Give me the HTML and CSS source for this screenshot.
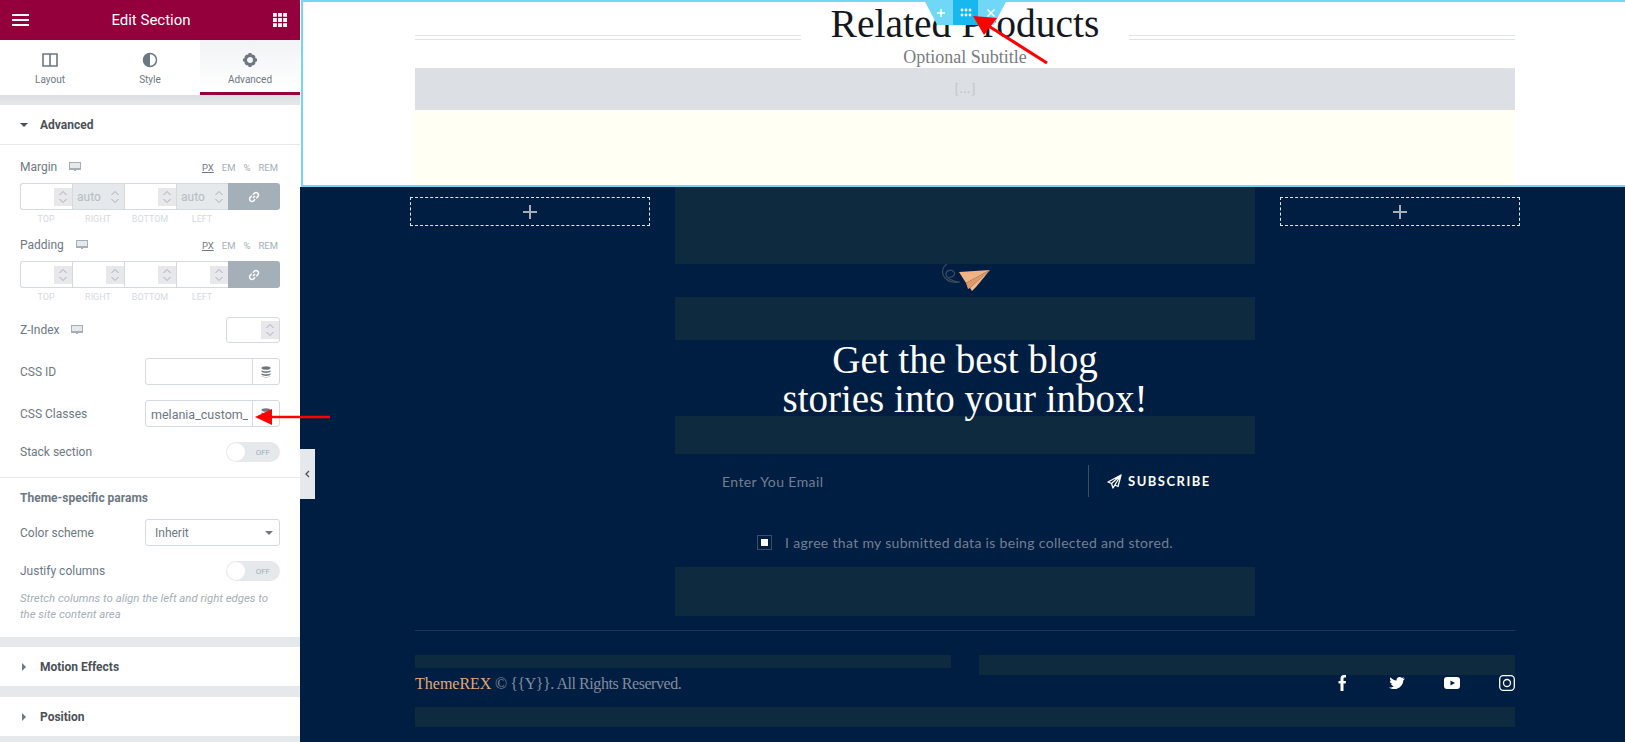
FILE: index.html
```html
<!DOCTYPE html>
<html lang="en">
<head>
    <meta charset="UTF-8">
    <meta name="viewport" content="width=device-width, initial-scale=1.0">
    <title>Edit Section</title>
    <link rel="stylesheet" href="styles.css">
</head>
<body>
    <svg class="defs" width="0" height="0">
        <symbol id="spin" viewBox="0 0 18 18">
            <path d="M5.500 7 9 3.500 12.500 7M5.500 11 9 14.500 12.500 11" fill="none" stroke="#a4afb7" stroke-width="1"/>
        </symbol>
        <symbol id="monitor" viewBox="0 0 12 12">
            <path d="M0 1h12v8H7v1H5V9H0z" fill="#a4afb7"/>
            <path d="M1 2h10v5H1z" fill="#e6e9ec"/>
        </symbol>
        <symbol id="link" viewBox="0 0 12 12">
            <path d="M5 7 7 5M4.800 3.800l1.500-1.500a1.900 1.900 0 0 1 3.400 3.400L8.200 7.200M7.200 8.200 5.700 9.700a1.900 1.900 0 0 1-3.400-3.400l1.500-1.500" fill="none" stroke="#fff" stroke-width="1.500"/>
        </symbol>
        <symbol id="db" viewBox="0 0 10 12">
            <ellipse cx="5" cy="2" rx="4.500" ry="1.800" fill="#6d7882"/>
            <path d="M.5 4.200c1.500 1.300 7.500 1.300 9 0v1.600c-1.500 1.500-7.500 1.500-9 0zM.5 7.200c1.500 1.300 7.500 1.300 9 0v1.600c-1.500 1.500-7.500 1.500-9 0zM.5 10c1.500 1.300 7.500 1.300 9 0v.3c-1.500 1.500-7.500 1.500-9 0z" fill="#6d7882"/>
        </symbol>
    </svg>

    <div class="page">
        <aside class="panel">
            <header class="panel-head">
                <span class="burger"><i></i><i></i><i></i></span>
                <span class="panel-title">Edit Section</span>
                <svg class="apps" viewBox="0 0 14 14" width="14" height="14" fill="#fff">
                    <path d="M0 0h3.800v3.800H0zM5.100 0h3.800v3.800H5.100zM10.200 0H14v3.800h-3.800zM0 5.100h3.800v3.800H0zM5.100 5.100h3.800v3.800H5.100zM10.200 5.100H14v3.800h-3.800zM0 10.200h3.800V14H0zM5.100 10.200h3.800V14H5.100zM10.200 10.200H14V14h-3.800z"/>
                </svg>
            </header>

            <nav class="tabs">
                <div class="tab">
                    <svg viewBox="0 0 16 16" width="16" height="16"><path d="M1 2h14v12H1zM8 2v12" fill="none" stroke="#6d7882" stroke-width="1.600"/></svg>
                    <span>Layout</span>
                </div>
                <div class="tab">
                    <svg viewBox="0 0 16 16" width="16" height="16"><circle cx="8" cy="8" r="6.500" fill="none" stroke="#6d7882" stroke-width="1.500"/><path d="M8 1.500a6.500 6.500 0 0 0 0 13z" fill="#6d7882"/></svg>
                    <span>Style</span>
                </div>
                <div class="tab tab-active">
                    <svg viewBox="0 0 16 16" width="16" height="16"><circle cx="8" cy="8" r="4.500" fill="none" stroke="#6d7882" stroke-width="3"/><path d="M6.500 1h3v3h-3zM6.500 12h3v3h-3zM1 6.500h3v3H1zM12 6.500h3v3h-3zM2.500 4.500l2-2 2 2-2 2zM9.500 4.500l2-2 2 2-2 2zM2.500 11.500l2-2 2 2-2 2zM9.500 11.500l2-2 2 2-2 2z" fill="#6d7882"/></svg>
                    <span>Advanced</span>
                </div>
            </nav>
            <div class="band band-top"></div>

            <div class="sec-head sec-open"><i class="caret-down"></i>Advanced</div>
            <div class="sec-body">
                <div class="label-row">
                    <span class="lbl">Margin</span>
                    <svg class="mon" width="12" height="12"><use href="#monitor"/></svg>
                    <span class="units"><u>PX</u><span>EM</span><span>%</span><span>REM</span></span>
                </div>
                <div class="dims">
                    <div class="dim"><span class="spin"><svg width="18" height="18"><use href="#spin"/></svg></span></div>
                    <div class="dim dim-off"><span class="auto">auto</span><span class="spin"><svg width="18" height="18"><use href="#spin"/></svg></span></div>
                    <div class="dim"><span class="spin"><svg width="18" height="18"><use href="#spin"/></svg></span></div>
                    <div class="dim dim-off"><span class="auto">auto</span><span class="spin"><svg width="18" height="18"><use href="#spin"/></svg></span></div>
                    <div class="dim-link"><svg width="12" height="12"><use href="#link"/></svg></div>
                </div>
                <div class="dim-names"><span>TOP</span><span>RIGHT</span><span>BOTTOM</span><span>LEFT</span></div>

                <div class="label-row label-next">
                    <span class="lbl">Padding</span>
                    <svg class="mon" width="12" height="12"><use href="#monitor"/></svg>
                    <span class="units"><u>PX</u><span>EM</span><span>%</span><span>REM</span></span>
                </div>
                <div class="dims">
                    <div class="dim"><span class="spin"><svg width="18" height="18"><use href="#spin"/></svg></span></div>
                    <div class="dim"><span class="spin"><svg width="18" height="18"><use href="#spin"/></svg></span></div>
                    <div class="dim"><span class="spin"><svg width="18" height="18"><use href="#spin"/></svg></span></div>
                    <div class="dim"><span class="spin"><svg width="18" height="18"><use href="#spin"/></svg></span></div>
                    <div class="dim-link"><svg width="12" height="12"><use href="#link"/></svg></div>
                </div>
                <div class="dim-names"><span>TOP</span><span>RIGHT</span><span>BOTTOM</span><span>LEFT</span></div>

                <div class="field field-z">
                    <span class="lbl">Z-Index</span>
                    <svg class="mon" width="12" height="12"><use href="#monitor"/></svg>
                    <div class="num-box"><span class="spin"><svg width="18" height="18"><use href="#spin"/></svg></span></div>
                </div>
                <div class="field">
                    <span class="lbl">CSS ID</span>
                    <div class="text-box"><span class="text-val"></span><span class="addon"><svg width="10" height="12"><use href="#db"/></svg></span></div>
                </div>
                <div class="field">
                    <span class="lbl">CSS Classes</span>
                    <div class="text-box"><span class="text-val">melania_custom_s</span><span class="addon"><svg width="10" height="12"><use href="#db"/></svg></span></div>
                </div>
                <div class="field field-toggle">
                    <span class="lbl">Stack section</span>
                    <div class="toggle"><i></i><span>OFF</span></div>
                </div>
            </div>
            <div class="sec-body sec-theme">
                <div class="sub-title">Theme-specific params</div>
                <div class="field field-select">
                    <span class="lbl">Color scheme</span>
                    <div class="select-box">Inherit<i class="caret-down"></i></div>
                </div>
                <div class="field field-toggle">
                    <span class="lbl">Justify columns</span>
                    <div class="toggle"><i></i><span>OFF</span></div>
                </div>
                <p class="note">Stretch columns to align the left and right edges to the site content area</p>
            </div>
            <div class="band"></div>
            <div class="sec-head"><i class="caret-right"></i>Motion Effects</div>
            <div class="band band-b"></div>
            <div class="sec-head"><i class="caret-right"></i>Position</div>
            <div class="band band-fill"></div>
        </aside>

        <main class="canvas">
            <section class="edit-section">
                <div class="edit-inner">
                    <div class="title-row">
                        <span class="dbl"></span>
                        <h2>Related Products</h2>
                        <span class="dbl"></span>
                    </div>
                    <div class="subtitle">Optional Subtitle</div>
                    <div class="shortcode">[...]</div>
                    <div class="cream"></div>
                </div>
                <div class="handles">
                    <span class="handle">
                        <svg width="10" height="10" viewBox="0 0 10 10"><path d="M5 1v8M1 5h8" stroke="#fff" stroke-width="1.500"/></svg>
                    </span>
                    <span class="handle handle-on">
                        <svg width="12" height="9" viewBox="0 0 12 9" fill="#fff"><circle cx="2" cy="2" r="1.400"/><circle cx="6" cy="2" r="1.400"/><circle cx="10" cy="2" r="1.400"/><circle cx="2" cy="7" r="1.400"/><circle cx="6" cy="7" r="1.400"/><circle cx="10" cy="7" r="1.400"/></svg>
                    </span>
                    <span class="handle">
                        <svg width="10" height="10" viewBox="0 0 10 10"><path d="M1.500 1.500l7 7M8.500 1.500l-7 7" stroke="#fff" stroke-width="1.500"/></svg>
                    </span>
                </div>
            </section>

            <section class="dark">
                <div class="news">
                    <div class="add-box"><svg width="14" height="14" viewBox="0 0 14 14"><path d="M7 0v14M0 7h14" stroke="#a4afb7" stroke-width="2"/></svg></div>
                    <div class="news-mid">
                        <div class="stripe stripe-a"></div>
                        <div class="plane-row">
                            <svg width="54" height="30" viewBox="0 0 54 30">
                                <path d="M8 0C3 3 2 10 6 14c4 4 10 5 15 4M21 18C14 18 7 14 7 10c0-4 6-5 8-2 2 3-2 6-5 5" fill="none" stroke="#3c4a5e" stroke-width="1.200"/>
                                <path d="M20 8 51 6 27 19z" fill="#f0b384"/>
                                <path d="M27 19 51 6 31 24 29 25z" fill="#df9a66"/>
                                <path d="M51 6 31 24 33 27 37 23z" fill="#f2b98e"/>
                            </svg>
                        </div>
                        <div class="stripe stripe-b"></div>
                        <h2 class="news-title">Get the best blog<br>stories into your inbox!</h2>
                        <div class="stripe stripe-c"></div>
                        <div class="news-form">
                            <div class="email-row">
                                <span class="email">Enter You Email</span>
                                <span class="sub-btn">
                                    <svg width="15" height="15" viewBox="0 0 15 15"><path d="M14 1 1 8l3.500 1.500L6 14l2-3 3 1.500zM14 1 4.500 9.500M14 1 6 14" fill="none" stroke="#fff" stroke-width="1.300" stroke-linejoin="round"/></svg>
                                    SUBSCRIBE
                                </span>
                            </div>
                            <div class="agree"><span class="check"><i></i></span>I agree that my submitted data is being collected and stored.</div>
                        </div>
                        <div class="stripe stripe-d"></div>
                    </div>
                    <div class="add-box"><svg width="14" height="14" viewBox="0 0 14 14"><path d="M7 0v14M0 7h14" stroke="#a4afb7" stroke-width="2"/></svg></div>
                </div>

                <footer class="foot">
                    <div class="foot-stripes">
                        <div class="stripe foot-s1"></div>
                        <div class="stripe foot-s2"></div>
                    </div>
                    <div class="foot-row">
                        <span class="copy"><a>ThemeREX</a> © {{Y}}. All Rights Reserved.</span>
                        <span class="social">
                            <svg width="16" height="16" viewBox="0 0 16 16" fill="#fff"><path d="M6.500 16V8.500H4.500V6h2V4c0-2.500 1-4 3.500-4h2v2.500h-1.200C9.800 2.500 9.500 3 9.500 4v2H12l-.4 2.500H9.500V16z"/></svg>
                            <svg width="16" height="16" viewBox="0 0 16 16" fill="#fff"><path d="M0 12.500c2 .2 3.500-.3 5-1.300-1.500-.2-2.500-1-3-2.200h1.300C1.800 8.500.9 7.300.9 5.900l1.300.4C.9 5.100.7 3.500 1.400 2.300 3 4.200 5 5.300 7.600 5.500 7.300 3.300 8.800 2 10.600 2c1 0 1.700.4 2.300 1l2.300-.8-1.400 1.900 2.200-.5-1.700 1.800C14.300 9.500 10.500 14 5.500 14 3.500 14 1.500 13.500 0 12.500z"/></svg>
                            <svg width="16" height="16" viewBox="0 0 16 16"><rect y="2" width="16" height="12" rx="3" fill="#fff"/><path d="M6.500 5.500 11 8l-4.500 2.500z" fill="#001e41"/></svg>
                            <svg width="16" height="16" viewBox="0 0 16 16" fill="none" stroke="#fff" stroke-width="1.300"><rect x=".7" y=".7" width="14.600" height="14.600" rx="3.500"/><circle cx="8" cy="8" r="3.500"/></svg>
                        </span>
                    </div>
                    <div class="stripe foot-s3"></div>
                </footer>
            </section>

            <div class="collapse-tab">
                <svg width="5" height="8" viewBox="0 0 5 8"><path d="M4 1 1 4l3 3" fill="none" stroke="#495157" stroke-width="1.300"/></svg>
            </div>

            <svg class="arrow arrow-top" width="90" height="60" viewBox="0 0 90 60">
                <path d="M74 49 14 11" stroke="#f00" stroke-width="3"/>
                <path d="M0 2 24 4 11 21z" fill="#f00"/>
            </svg>
            <svg class="arrow arrow-side" width="76" height="20" viewBox="0 0 76 20">
                <path d="M15 10h60" stroke="#f00" stroke-width="2.500"/>
                <path d="M0 10 17 2v16z" fill="#f00"/>
            </svg>
        </main>
    </div>
</body>
</html>
```

FILE: styles.css
```css
* {
    box-sizing: border-box;
}
html, body {
    margin: 0;
    padding: 0;
    height: 100%;
    overflow: hidden;
}
body {
    font-family: Roboto, Arial, sans-serif;
    background-color: #001e41;
}
.defs {
    display: block;
    height: 0;
}
.page {
    display: flex;
    width: 1625px;
    height: 742px;
    overflow: hidden;
}

/* left panel */
.panel {
    width: 300px;
    flex: none;
    background: #fff;
    color: #6d7882;
    display: flex;
    flex-direction: column;
}
.panel-head {
    height: 40px;
    background: #93003c;
    display: flex;
    align-items: center;
    justify-content: space-between;
    padding: 0 13px 0 12px;
    color: #fff;
}
.panel-title {
    font-size: 15px;
}
.burger {
    width: 17px;
    display: flex;
    flex-direction: column;
    gap: 3px;
}
.burger i {
    height: 2px;
    background: #fff;
}
.tabs {
    height: 55px;
    display: flex;
}
.tab {
    width: 100px;
    display: flex;
    flex-direction: column;
    align-items: center;
    padding-top: 12px;
    font-size: 10px;
    gap: 6px;
    color: #6d7882;
}
.tab-active {
    background: linear-gradient(#f1f3f5, #fff);
    border-bottom: 3px solid #93003c;
}
.band {
    height: 10px;
    background: #e6e9ec;
    flex: none;
}
.band-top {
    background: linear-gradient(#dcdfe2, #e6e9ec);
}
.band-b {
    height: 11px;
}
.band-fill {
    flex: 1;
}
.sec-head {
    height: 39px;
    flex: none;
    display: flex;
    align-items: center;
    padding-left: 20px;
    font-size: 12px;
    font-weight: 700;
    color: #495157;
}
.sec-open {
    height: 40px;
    border-bottom: 1px solid #e6e9ec;
}
.caret-down {
    width: 0;
    height: 0;
    border-left: 4px solid transparent;
    border-right: 4px solid transparent;
    border-top: 4px solid #495157;
    margin-right: 12px;
}
.caret-right {
    width: 0;
    height: 0;
    border-top: 4px solid transparent;
    border-bottom: 4px solid transparent;
    border-left: 4px solid #6d7882;
    margin: 0 14px 0 2px;
}
.sec-body {
    padding: 13px 20px 15px;
    border-bottom: 1px solid #e6e9ec;
}
.sec-theme {
    padding-top: 11px;
    border-bottom: 0;
}
.lbl {
    font-size: 12px;
    color: #6d7882;
}
.mon {
    margin-left: 12px;
}
.label-row {
    height: 18px;
    display: flex;
    align-items: center;
    margin-bottom: 7px;
}
.label-next {
    margin-top: 8px;
}
.units {
    margin-left: auto;
    display: flex;
    gap: 8px;
    font-size: 9.500px;
    color: #a4afb7;
    padding-right: 2px;
}
.units u {
    color: #6d7882;
}
.dims {
    display: grid;
    grid-template-columns: repeat(5, 52px);
    height: 27px;
}
.dim {
    border: 1px solid #d5dadf;
    border-right: 0;
    display: flex;
    align-items: center;
    justify-content: flex-end;
    background: #fff;
}
.dims .dim:first-child {
    border-radius: 3px 0 0 3px;
}
.dim-off {
    background: #e6e9ec;
}
.auto {
    font-size: 12px;
    color: #b4bcc4;
    margin-right: auto;
    padding-left: 4px;
}
.spin {
    width: 18px;
    height: 18px;
    background: #e8e8ec;
    display: block;
    flex: none;
}
.dim-off .spin {
    background: #e6e9ec;
}
.spin svg {
    display: block;
}
.dim-link {
    background: #a4afb7;
    border-radius: 0 3px 3px 0;
    display: flex;
    align-items: center;
    justify-content: center;
}
.dim-names {
    display: grid;
    grid-template-columns: repeat(4, 52px);
    height: 18px;
    line-height: 18px;
    font-size: 9px;
    color: #d5dadf;
    text-align: center;
}
.field {
    display: flex;
    align-items: center;
    height: 27px;
    margin-top: 15px;
}
.field-z {
    height: 26px;
    margin-top: 11px;
}
.field-toggle {
    height: 20px;
}
.field-select {
    margin-top: 12px;
}
.num-box {
    margin-left: auto;
    width: 54px;
    height: 26px;
    border: 1px solid #d5dadf;
    border-radius: 3px;
    display: flex;
    align-items: center;
    justify-content: flex-end;
}
.text-box {
    margin-left: auto;
    width: 135px;
    height: 27px;
    border: 1px solid #d5dadf;
    border-radius: 3px;
    display: flex;
}
.text-val {
    flex: 1;
    min-width: 0;
    overflow: hidden;
    white-space: nowrap;
    font-size: 12.500px;
    line-height: 27px;
    margin: 0 4px 0 5px;
    color: #6d7882;
}
.addon {
    width: 27px;
    flex: none;
    border-left: 1px solid #d5dadf;
    display: flex;
    align-items: center;
    justify-content: center;
}
.toggle {
    margin-left: auto;
    width: 54px;
    height: 20px;
    border-radius: 10px;
    background: #e6e9ec;
    position: relative;
    display: flex;
    align-items: center;
    justify-content: flex-end;
    padding-right: 10px;
    font-size: 8px;
    color: #a4afb7;
}
.toggle i {
    position: absolute;
    left: 1px;
    top: 1px;
    width: 18px;
    height: 18px;
    border-radius: 50%;
    background: #fff;
}
.sub-title {
    height: 18px;
    line-height: 18px;
    font-size: 12px;
    font-weight: 700;
    color: #6d7882;
}
.select-box {
    margin-left: auto;
    width: 135px;
    height: 27px;
    border: 1px solid #d5dadf;
    border-radius: 3px;
    display: flex;
    align-items: center;
    justify-content: space-between;
    padding-left: 9px;
    font-size: 12px;
    color: #6d7882;
}
.select-box .caret-down {
    margin-right: 6px;
    border-top-color: #6d7882;
}
.note {
    margin: 9px 0 0;
    font-size: 11.400px;
    line-height: 16px;
    font-style: italic;
    color: #a4afb7;
}

/* page canvas */
.canvas {
    flex: 1;
    position: relative;
    background: #001e41;
    min-width: 0;
}
.edit-section {
    position: relative;
    height: 187px;
    background: #fff;
    padding-left: 1px;
}
.edit-inner {
    height: 187px;
    border: 2px solid #71d7f7;
    border-right: 0;
    padding-left: 112px;
}
.title-row {
    width: 1100px;
    height: 44px;
    display: flex;
    justify-content: space-between;
}
.title-row h2 {
    margin: 0;
    font-family: "Liberation Serif", serif;
    font-weight: 400;
    font-size: 39.500px;
    line-height: 44px;
    color: #15171e;
}
.dbl {
    width: 386px;
    height: 5px;
    margin-top: 33px;
    border-top: 1px solid #dfe4e4;
    border-bottom: 1px solid #dfe4e4;
}
.subtitle {
    width: 1100px;
    height: 22px;
    line-height: 22px;
    text-align: center;
    font-family: "Liberation Serif", serif;
    font-size: 18px;
    color: #797c7f;
}
.shortcode {
    width: 1100px;
    height: 42px;
    line-height: 40px;
    background: #dcdfe3;
    text-align: center;
    font-family: "Liberation Serif", serif;
    font-size: 15px;
    color: #c3c8cd;
}
.cream {
    width: 1100px;
    height: 75px;
    background: #fffff3;
}
.handles {
    position: absolute;
    left: 624px;
    top: 0;
    width: 83px;
    height: 25px;
    background: #71d7f7;
    clip-path: polygon(0 0, 100% 0, 84% 100%, 16% 100%);
    display: flex;
    justify-content: center;
}
.handle {
    width: 25px;
    display: flex;
    align-items: center;
    justify-content: center;
}
.handle-on {
    background: #17b7f0;
}
.dark {
    height: 555px;
}
.news {
    display: flex;
    gap: 25px;
    padding-left: 110px;
    height: 429px;
}
.add-box {
    width: 240px;
    height: 29px;
    margin-top: 10px;
    border: 1px dashed #e4e7ea;
    display: flex;
    align-items: center;
    justify-content: center;
}
.news-mid {
    width: 580px;
}
.stripe {
    background: #0e2a3f;
}
.stripe-a {
    height: 77px;
}
.plane-row {
    height: 33px;
    padding: 0 0 0 264px;
}
.plane-row svg {
    display: block;
}
.stripe-b {
    height: 43px;
}
.news-title {
    margin: 0;
    height: 76px;
    text-align: center;
    font-family: "Liberation Serif", serif;
    font-weight: 400;
    font-size: 39px;
    line-height: 39px;
    color: #fff;
}
.stripe-c {
    height: 38px;
}
.news-form {
    height: 113px;
    padding-top: 11px;
    font-family: Lato, sans-serif;
}
.email-row {
    display: flex;
    align-items: center;
    height: 32px;
    padding-left: 47px;
}
.email {
    width: 366px;
    font-size: 14px;
    letter-spacing: .4px;
    color: #747f92;
}
.sub-btn {
    height: 32px;
    border-left: 1px solid #3a4c68;
    padding-left: 18px;
    display: flex;
    align-items: center;
    gap: 6px;
    font-size: 13px;
    font-weight: 700;
    letter-spacing: 1.500px;
    color: #fff;
}
.agree {
    display: flex;
    align-items: center;
    margin: 38px 0 0 82px;
    height: 15px;
    font-size: 14px;
    letter-spacing: .32px;
    color: #747f92;
}
.check {
    width: 15px;
    height: 15px;
    border: 1px solid #3a4c68;
    margin-right: 13px;
    display: flex;
    align-items: center;
    justify-content: center;
}
.check i {
    width: 7px;
    height: 7px;
    background: #fff;
}
.stripe-d {
    height: 49px;
}
.foot {
    margin: 14px 0 0 115px;
    width: 1100px;
    border-top: 1px solid #1c3658;
    padding-top: 24px;
}
.foot-stripes {
    display: flex;
    justify-content: space-between;
    height: 20px;
}
.foot-s1 {
    width: 536px;
    height: 13px;
}
.foot-s2 {
    width: 536px;
    height: 20px;
}
.foot-row {
    height: 32px;
    display: flex;
    justify-content: space-between;
    align-items: flex-start;
}
.copy {
    font-family: "Liberation Serif", serif;
    font-size: 16px;
    line-height: 18px;
    letter-spacing: -.45px;
    color: #838b9d;
}
.copy a {
    letter-spacing: 0;
    color: #e0a878;
}
.social {
    display: flex;
    gap: 39px;
}
.social svg {
    display: block;
}
.foot-s3 {
    height: 20px;
}

/* things lying over the page */
.collapse-tab {
    position: absolute;
    left: 0;
    top: 449px;
    width: 15px;
    height: 50px;
    background: #e6e9ec;
    display: flex;
    align-items: center;
    justify-content: center;
}
.arrow {
    position: absolute;
    overflow: visible;
}
.arrow-top {
    left: 673px;
    top: 14px;
}
.arrow-side {
    left: -45px;
    top: 407px;
}
```
